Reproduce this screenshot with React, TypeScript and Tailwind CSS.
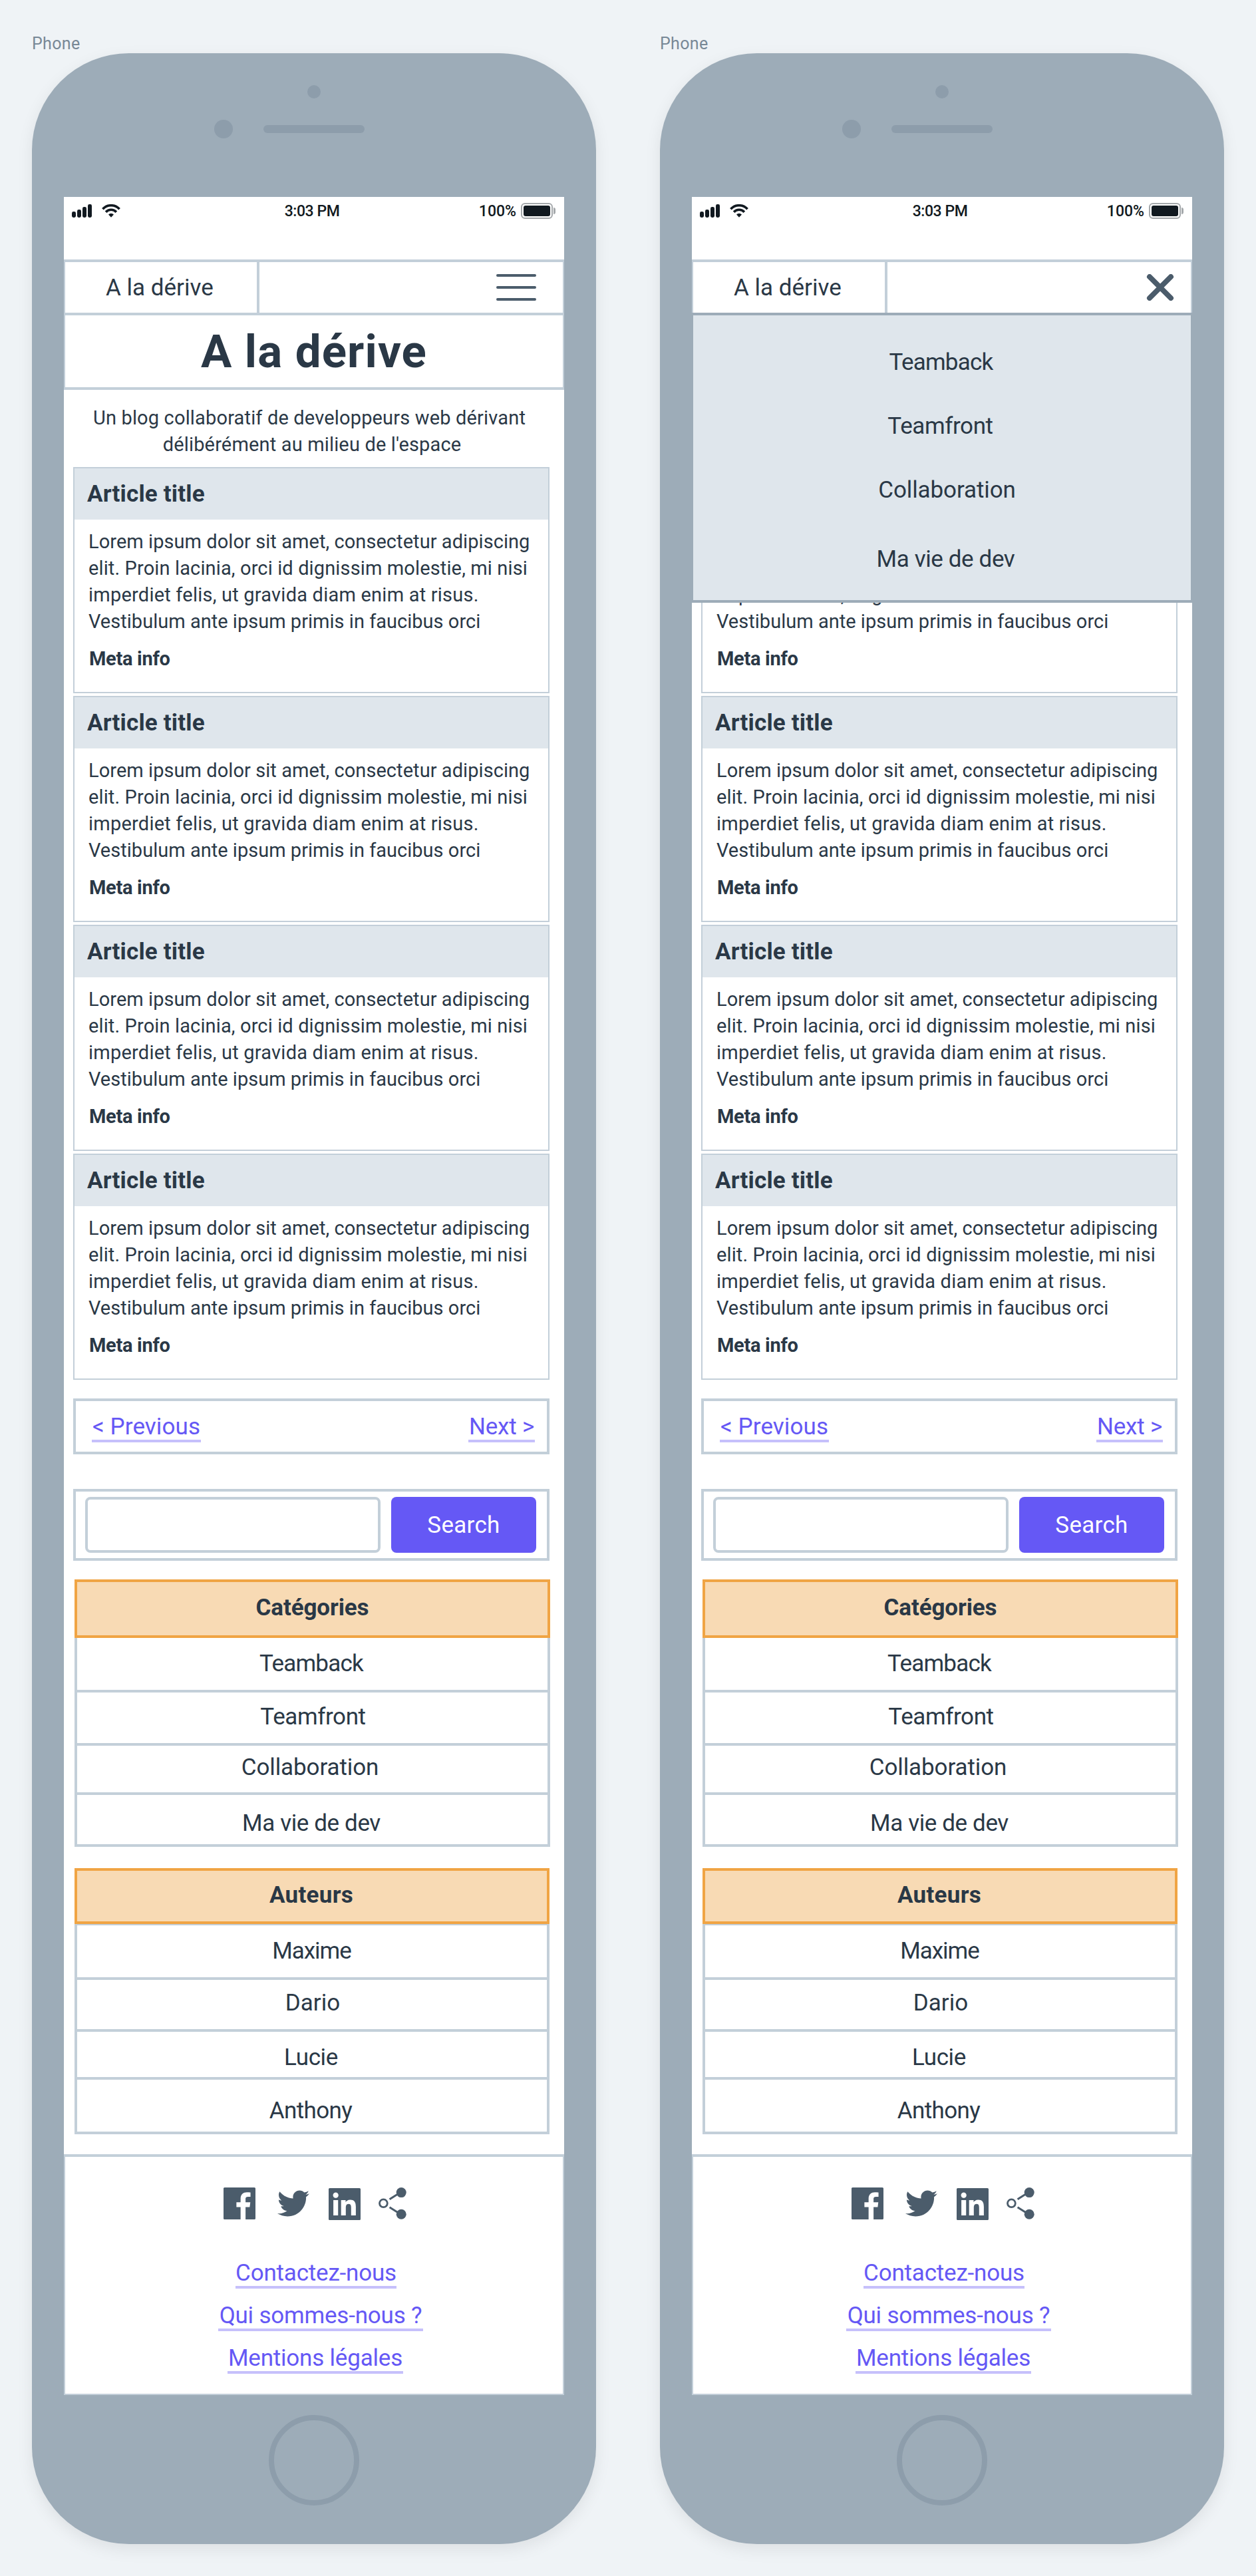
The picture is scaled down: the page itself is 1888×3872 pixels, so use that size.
import { FaTwitter } from "react-icons/fa";

const articles = [1, 2, 3, 4];

const lorem = [
  { text: "Lorem ipsum dolor sit amet, consectetur adipiscing", cls: "tracking-[0.06px]" },
  { text: "elit. Proin lacinia, orci id dignissim molestie, mi nisi", cls: "tracking-[0.13px]" },
  { text: "imperdiet felis, ut gravida diam enim at risus.", cls: "tracking-[0.22px]" },
  { text: "Vestibulum ante ipsum primis in faucibus orci", cls: "tracking-[0.02px]" },
];

const categories = [
  { label: "Teamback", cls: "h-[82px] pt-[18px] pr-[3px] tracking-[-0.8px]" },
  { label: "Teamfront", cls: "h-[80px] pt-[16px] pl-[2px] tracking-[-0.4px]" },
  { label: "Collaboration", cls: "h-[74px] pt-[12px] pr-[7px] tracking-[-0.1px]" },
  { label: "Ma vie de dev", cls: "h-[78px] pt-[22px] pr-[3px] tracking-[-0.4px]" },
];

const authors = [
  { label: "Maxime", cls: "h-[84px] border-t-2 pt-[18px] pr-[1px] tracking-[-1px]" },
  { label: "Dario", cls: "h-[78px] pt-[14px] pl-[2px]" },
  { label: "Lucie", cls: "h-[72px] pt-[18px] pr-[3px] tracking-[-0.4px]" },
  { label: "Anthony", cls: "h-[82px] pt-[26px] pr-[4px] tracking-[-0.6px]" },
];

const menu = [
  { label: "Teamback", cls: "pr-[3px] tracking-[-0.8px]" },
  { label: "Teamfront", cls: "mt-[54px] pr-[5px] tracking-[-0.4px]" },
  { label: "Collaboration", cls: "mt-[54px] pl-[15px] tracking-[-0.1px]" },
  { label: "Ma vie de dev", cls: "mt-[62px] pl-[11px] tracking-[-0.4px]" },
];

const footerLinks = [
  { label: "Contactez-nous", cls: "w-[242px] ml-[6px] tracking-[-0.2px]" },
  { label: "Qui sommes-nous ?", cls: "w-[308px] ml-[20px] tracking-[-0.2px]" },
  { label: "Mentions légales", cls: "w-[264px] ml-[4px] tracking-[-0.2px]" },
];

function StatusBar() {
  return (
    <div className="h-[94px] pt-2 text-[#111920]">
      <div className="grid h-6 grid-cols-3 items-center text-[23px] leading-[24px] font-medium">
        <div className="flex items-center gap-[15px] pl-3">
          <svg width="30" height="20" viewBox="0 0 30 20" fill="currentColor">
            <rect x="0" y="11" width="6" height="9" rx="2.4" />
            <rect x="8" y="8" width="6" height="12" rx="2.4" />
            <rect x="16" y="4" width="6" height="16" rx="2.4" />
            <rect x="24" y="0" width="6" height="20" rx="2.4" />
          </svg>
          <svg width="28" height="20" viewBox="0 0 28 20" fill="none" stroke="currentColor" strokeWidth="3.6">
            <path d="M1.4 7.3A17 17 0 0 1 26.6 7.3" />
            <path d="M6.1 11.8A10.6 10.6 0 0 1 21.9 11.8" />
            <path d="M14 19.8L10 15.4a5.6 5.6 0 0 1 8 0z" fill="currentColor" stroke="none" />
          </svg>
        </div>
        <div className="pt-[2px] pr-[6px] text-center tracking-[-0.45px]">3:03 PM</div>
        <div className="flex items-center justify-end pr-[13px]">
          <span className="pt-[2px]">100%</span>
          <div className="ml-[7px] h-6 w-[48px] rounded-[6px] border-2 border-[#a4a8ab] p-[2px]">
            <div className="h-full w-full rounded-[3px] bg-[#111920]" />
          </div>
          <div className="ml-[1px] h-[10px] w-[3px] rounded-r-full bg-[#a4a8ab]" />
        </div>
      </div>
    </div>
  );
}

function NavBar({ open }: { open: boolean }) {
  return (
    <nav className="flex h-[84px] border-x-2 border-y-4 border-[#c3cfd9]">
      <div className="w-[292px] border-r-4 border-[#c3cfd9] pt-[18px] pl-[61px] text-[35px] leading-[42px]">
        A la dérive
      </div>
      {open ? (
        <button className="mt-[18px] mr-[25px] ml-auto h-10 w-[42px]" aria-label="Fermer le menu">
          <svg width="42" height="40" viewBox="0 0 42 40" fill="none" stroke="#4b5c6b" strokeWidth="8" strokeLinecap="round">
            <path d="M5 4L37 36M37 4L5 36" />
          </svg>
        </button>
      ) : (
        <button className="mt-[18px] mr-[40px] ml-auto flex h-10 w-[60px] flex-col justify-between" aria-label="Menu">
          <span className="h-1 w-full rounded-full bg-[#4b5c6b]" />
          <span className="h-1 w-full rounded-full bg-[#4b5c6b]" />
          <span className="h-1 w-full rounded-full bg-[#4b5c6b]" />
        </button>
      )}
    </nav>
  );
}

function MenuOverlay() {
  return (
    <div className="absolute inset-x-0 top-[174px] h-[436px] border-x-2 border-y-4 border-[#9dacb8] bg-[#dfe6ec] pt-[50px]">
      {menu.map((m) => (
        <div key={m.label} className={"text-center text-[35px] leading-[42px] " + m.cls}>
          {m.label}
        </div>
      ))}
    </div>
  );
}

// `covered` marks the article whose top lies under the open menu.
function Article({ covered }: { covered: boolean }) {
  return (
    <article className="h-[340px] border-2 border-[#c3cfd9]">
      <h2
        className={
          "h-[77px] bg-[#dfe6ec] pt-[18px] pl-[19px] text-[35px] leading-[42px] font-bold tracking-[0.18px] " +
          (covered ? "invisible" : "")
        }
      >
        Article title
      </h2>
      <div className="pt-[13px] pl-[21px] text-[29px] leading-[40px]">
        {lorem.map((l, i) => (
          <div key={l.text} className={"whitespace-nowrap " + l.cls + (covered && i < 2 ? " invisible" : "")}>
            {l.text}
          </div>
        ))}
        <div className="mt-4 pl-[1px] font-bold tracking-[-0.3px]">Meta info</div>
      </div>
    </article>
  );
}

function ListBlock({ title, titleCls, items }: { title: string; titleCls: string; items: { label: string; cls: string }[] }) {
  return (
    <section className="text-center text-[35px] leading-[42px]">
      <h2 className={"border-4 border-[#f0a444] bg-[#f8dab4] font-bold " + titleCls}>{title}</h2>
      {items.map((i) => (
        <div key={i.label} className={"border-x-4 border-b-4 border-[#c3cfd9] " + i.cls}>
          {i.label}
        </div>
      ))}
    </section>
  );
}

function SocialIcons() {
  return (
    <div className="flex h-[50px] items-start pl-[238px] text-[#4b5c6b]">
      <svg width="48" height="48" viewBox="0 0 24 24" fill="currentColor">
        <path d="M23.2 0H.8C.36 0 0 .36 0 .8v22.4c0 .44.36.8.8.8h12.02v-9.294H9.689v-3.621h3.129V8.41c0-3.099 1.894-4.785 4.659-4.785 1.325 0 2.464.097 2.796.141v3.24h-1.921c-1.5 0-1.792.721-1.792 1.771v2.311h3.584l-.465 3.63H16.56V24h6.64c.44 0 .8-.36.8-.8V.8c0-.44-.36-.8-.8-.8" />
      </svg>
      <FaTwitter className="ml-[33px] size-[48px]" />
      <svg className="mt-[1px] ml-[29px]" width="48" height="48" viewBox="0 0 24 24" fill="currentColor">
        <path d="M20.447 20.452h-3.554v-5.569c0-1.328-.027-3.037-1.852-3.037-1.853 0-2.136 1.445-2.136 2.939v5.667H9.351V9h3.414v1.561h.046c.477-.9 1.637-1.85 3.37-1.85 3.601 0 4.267 2.37 4.267 5.455v6.286zM5.337 7.433c-1.144 0-2.063-.926-2.063-2.065 0-1.138.92-2.063 2.063-2.063 1.14 0 2.064.925 2.064 2.063 0 1.139-.925 2.065-2.064 2.065zm1.782 13.019H3.555V9h3.564v11.452zM23.2 0H.8C.36 0 0 .36 0 .8v22.4c0 .44.36.8.8.8h22.4c.44 0 .8-.36.8-.8V.8c0-.44-.36-.8-.8-.8z" />
      </svg>
      <svg className="ml-[27px]" width="42" height="48" viewBox="0 0 42 48" fill="none" stroke="currentColor">
        <circle cx="7.4" cy="23.8" r="5.9" strokeWidth="2.8" />
        <path d="M16.6 17.7L32 8M16.6 29.8L32 39.5" strokeWidth="3" />
        <circle cx="34.2" cy="7.6" r="7.5" fill="currentColor" stroke="none" />
        <circle cx="34.2" cy="40.2" r="7.5" fill="currentColor" stroke="none" />
      </svg>
    </div>
  );
}

function Footer() {
  return (
    <footer className="mt-[30px] h-[362px] border-x-2 border-t-4 border-b-2 border-[#c3cfd9] pt-[46px]">
      <SocialIcons />
      <div className="mt-[58px] flex flex-col items-center gap-5 text-center text-[35px] leading-[42px] text-[#6558f5]">
        {footerLinks.map((l) => (
          <a key={l.label} className={"h-[44px] border-b-4 border-[#c6c0fb] whitespace-nowrap " + l.cls}>
            {l.label}
          </a>
        ))}
      </div>
    </footer>
  );
}

function Phone({ open = false }: { open?: boolean }) {
  return (
    <div className="w-[848px]">
      <div className="h-20 pt-[50px] text-[25px] leading-[32px] tracking-[0.35px] text-[#788896]">Phone</div>
      <div className="h-[3744px] rounded-[146px] bg-[#9dacb8] px-12 shadow-[0_8px_24px_rgba(0,0,0,0.08)]">
        <div className="h-[216px] pt-12">
          <div className="mx-auto h-5 w-5 rounded-full bg-[#8d9dab]" />
          <div className="mt-8 flex items-center gap-[46px] pl-[226px]">
            <div className="h-7 w-7 rounded-full bg-[#8d9dab]" />
            <div className="h-3 w-[152px] rounded-full bg-[#8d9dab]" />
          </div>
        </div>
        <div className="relative h-[3304px] bg-white">
          <StatusBar />
          <NavBar open={open} />
          <div className={open ? "invisible" : ""}>
            <h1 className="h-[112px] border-x-2 border-b-4 border-[#c3cfd9] pt-[15px] text-center text-[69px] leading-[80px] font-bold tracking-[1.15px]">
              A la dérive
            </h1>
            <p className="h-[102px] pt-[22px] text-center text-[29px] leading-[40px] tracking-[0.16px]">
              <span className="block pr-[14px]">Un blog collaboratif de developpeurs web dérivant</span>
              <span className="block pr-[6px]">délibérément au milieu de l'espace</span>
            </p>
          </div>
          <div className="mt-[14px] ml-[14px] flex w-[716px] flex-col gap-1">
            {articles.map((a, i) => (
              <Article key={a} covered={open && i === 0} />
            ))}
          </div>
          <div className="mt-7 ml-[14px] flex h-[84px] w-[716px] items-start justify-between border-4 border-[#c3cfd9] pt-[18px] pr-[18px] pl-6 text-center text-[35px] leading-[42px] text-[#6558f5]">
            <a className="h-[44px] w-[164px] border-b-4 border-[#c6c0fb] tracking-[0.1px] whitespace-nowrap">&lt; Previous</a>
            <a className="h-[44px] w-[100px] border-b-4 border-[#c6c0fb] tracking-[-0.2px] whitespace-nowrap">Next &gt;</a>
          </div>
          <div className="mt-[52px] ml-[14px] flex h-[108px] w-[716px] items-center gap-4 border-4 border-[#c3cfd9] pl-[14px]">
            <input className="h-[84px] w-[444px] rounded-lg border-4 border-[#c3cfd9]" />
            <button className="h-[84px] w-[218px] rounded-lg bg-[#6558f5] pt-[2px] text-[35px] leading-[40px] tracking-[0.3px] text-white">
              Search
            </button>
          </div>
          <div className="mt-7 ml-4 w-[715px]">
            <ListBlock title="Catégories" titleCls="h-[88px] pt-[18px] tracking-[-0.12px]" items={categories} />
          </div>
          <div className="mt-8 ml-4 w-[714px]">
            <ListBlock title="Auteurs" titleCls="h-[84px] pt-[16px] pr-[2px] tracking-[0.3px]" items={authors} />
          </div>
          <Footer />
          {open && <MenuOverlay />}
        </div>
        <div className="mx-auto mt-[30px] h-[136px] w-[136px] rounded-full border-8 border-[#8d9dab]" />
      </div>
    </div>
  );
}

export default function App() {
  return (
    <div className="flex h-[3872px] w-[1888px] gap-24 overflow-hidden bg-[#eff3f6] pl-12 font-['Roboto','Liberation_Sans',sans-serif] text-[#2a3846]">
      <Phone />
      <Phone open />
    </div>
  );
}
